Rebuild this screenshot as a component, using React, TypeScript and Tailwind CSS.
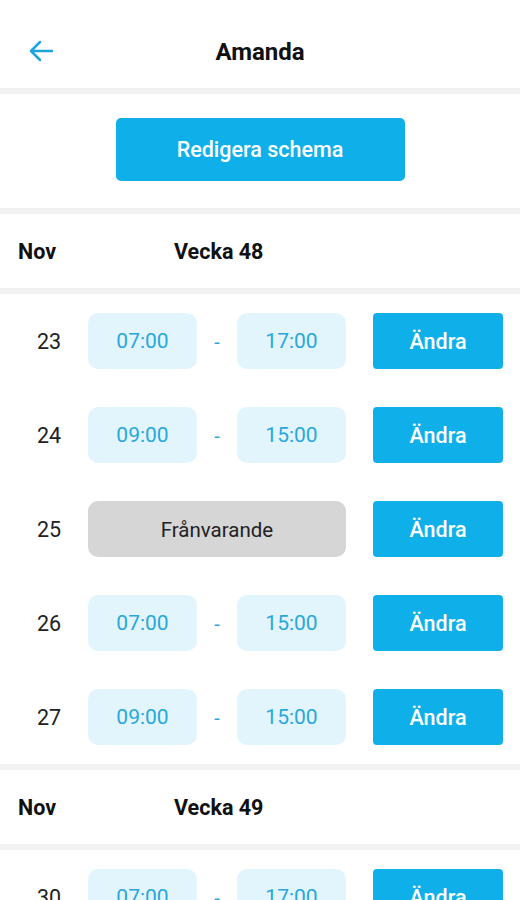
import { Fragment } from 'react';

type Day = { date: number; from?: string; to?: string; absent?: boolean };
type Week = { month: string; week: number; days: Day[] };

const WEEKS: Week[] = [
  {
    month: 'Nov',
    week: 48,
    days: [
      { date: 23, from: '07:00', to: '17:00' },
      { date: 24, from: '09:00', to: '15:00' },
      { date: 25, absent: true },
      { date: 26, from: '07:00', to: '15:00' },
      { date: 27, from: '09:00', to: '15:00' },
    ],
  },
  {
    month: 'Nov',
    week: 49,
    days: [
      { date: 30, from: '07:00', to: '17:00' },
      { date: 1, from: '07:00', to: '17:00' },
    ],
  },
];

const Band = () => <div className="h-[6px] bg-[#f2f2f2]" />;

const DayRow = ({ day }: { day: Day }) => (
  <div className="flex items-center h-[94px] pl-[37px] pr-[17px]">
    <span className="w-[51px] pt-[2px] text-[21.5px] text-[#222]">{day.date}</span>
    {day.absent ? (
      <div className="w-[258px] h-[56px] pt-[2px] rounded-[10px] bg-[#d6d6d6] flex items-center justify-center text-[20.5px] text-[#222]">
        Frånvarande
      </div>
    ) : (
      <div className="flex items-center">
        <div className="w-[109px] h-[56px] pt-[2px] rounded-[10px] bg-[#e3f5fc] flex items-center justify-center text-[21px] text-[#28a8dc]">
          {day.from}
        </div>
        <span className="w-[40px] pt-[2px] text-center text-[20px] text-[#28a8dc]">-</span>
        <div className="w-[109px] h-[56px] pt-[2px] rounded-[10px] bg-[#e3f5fc] flex items-center justify-center text-[21px] text-[#28a8dc]">
          {day.to}
        </div>
      </div>
    )}
    <button className="ml-auto w-[130px] h-[56px] pt-[2px] rounded-[4px] bg-[#0fb0ea] text-white text-[21.5px] font-medium">
      Ändra
    </button>
  </div>
);

export default function App() {
  return (
    <div className="w-[520px] h-[900px] overflow-hidden bg-white font-['Roboto',sans-serif]">
      <header className="relative h-[88px] flex items-center justify-center">
        <button className="absolute left-[28px] top-[39px] text-[#1ea4dc]">
          <svg width="26" height="24" viewBox="0 0 26 24" fill="none" stroke="currentColor" strokeWidth="2.5" strokeLinecap="round" strokeLinejoin="round">
            <path d="M24 12H3M12 3l-9 9 9 9" />
          </svg>
        </button>
        <h1 className="text-[24px] font-bold text-[#111] mt-[16px]">Amanda</h1>
      </header>
      <Band />
      <div className="h-[114px] flex items-center justify-center">
        <button className="w-[289px] h-[63px] pt-[3px] rounded-[5px] bg-[#0fb0ea] text-white text-[21.5px] font-medium mt-[-4px]">
          Redigera schema
        </button>
      </div>
      {WEEKS.map(w => (
        <Fragment key={w.week}>
          <Band />
          <div className="h-[74px] flex items-center pl-[18px] pt-[3px] text-[21.5px] font-bold text-[#111]">
            <span className="w-[156px]">{w.month}</span>
            <span>Vecka {w.week}</span>
          </div>
          <Band />
          {w.days.map(d => (
            <DayRow key={d.date} day={d} />
          ))}
        </Fragment>
      ))}
    </div>
  );
}
